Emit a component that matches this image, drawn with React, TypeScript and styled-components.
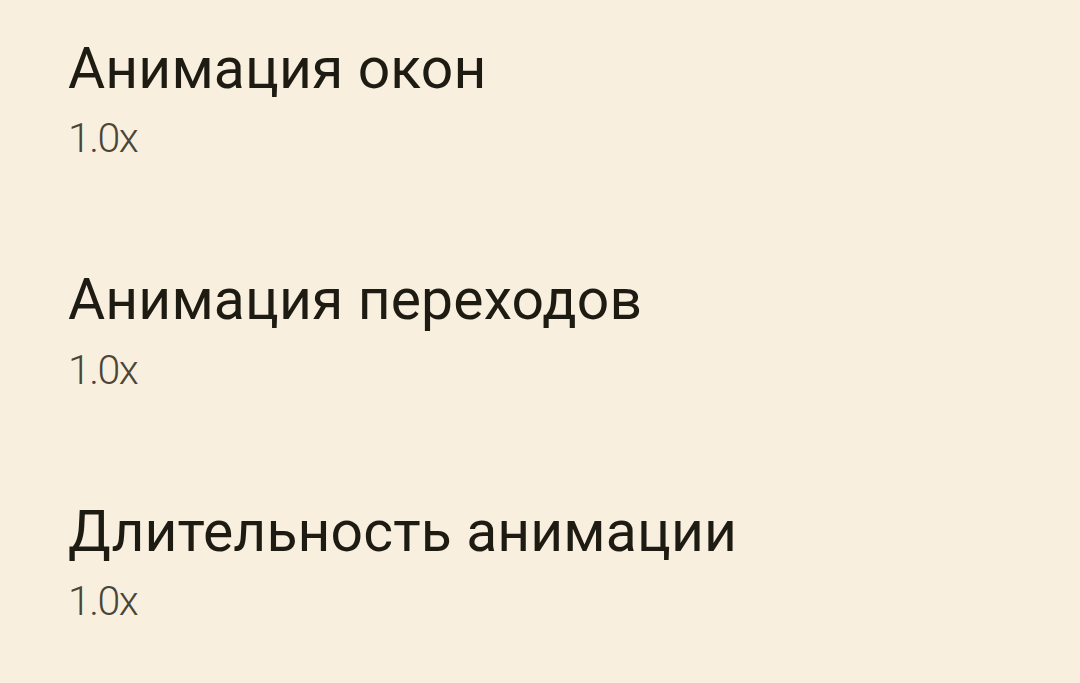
import * as React from 'react';
import styled, { createGlobalStyle } from 'styled-components';

const GlobalStyle = createGlobalStyle`
  html, body {
    margin: 0;
    padding: 0;
    background: #f8efdf;
  }
`;

const items = [
  { title: 'Анимация окон', value: '1.0x' },
  { title: 'Анимация переходов', value: '1.0x' },
  { title: 'Длительность анимации', value: '1.0x' },
];

const App = () => (
  <>
    <GlobalStyle />
    <List>
      {items.map(item => (
        <Row key={item.title}>
          <Title>{item.title}</Title>
          <Value>{item.value}</Value>
        </Row>
      ))}
    </List>
  </>
);

const List = styled.div`
  display: flex;
  flex-direction: column;
  width: 1080px;
  height: 683px;
  overflow: hidden;
  padding: 34.5px 0 0 68px;
  box-sizing: border-box;
  background: #f8efdf;
`;

const Row = styled.div`
  display: flex;
  flex-direction: column;
  flex-shrink: 0;
  height: 231.5px;
`;

const Title = styled.div`
  font-family: Roboto, 'Noto Sans', sans-serif;
  font-size: 57px;
  line-height: 68px;
  letter-spacing: 0.15px;
  color: #1e1b13;
`;

const Value = styled.div`
  font-family: Roboto, 'Noto Sans', sans-serif;
  font-size: 41px;
  font-weight: 300;
  line-height: 48px;
  letter-spacing: -1.5px;
  margin-top: 11.5px;
  color: #4a4536;
`;

export default App;
